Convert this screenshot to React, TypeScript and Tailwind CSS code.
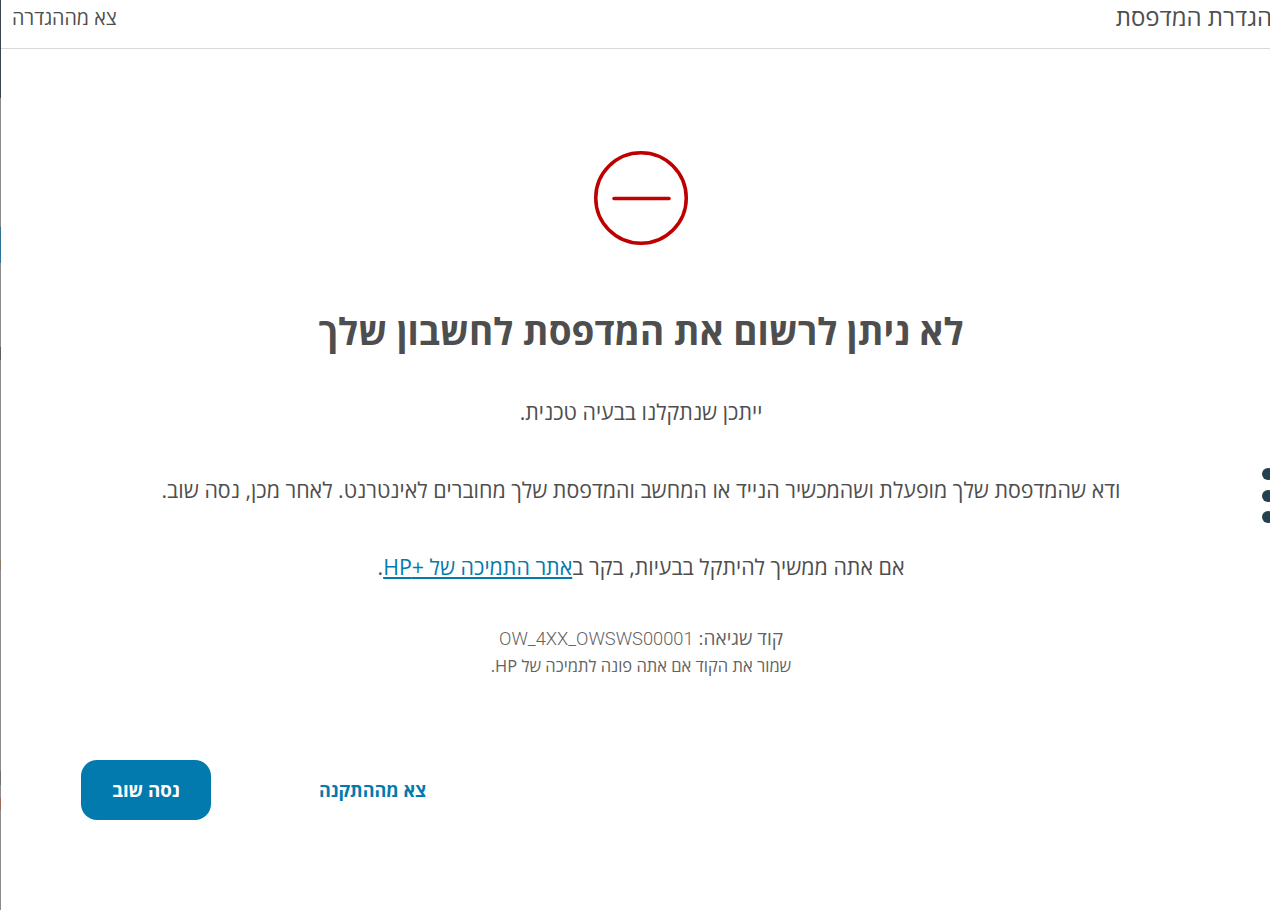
const App = () => {
  return (
    <div dir="rtl" className="relative flex h-[910px] w-full overflow-hidden bg-white font-['Open_Sans','Liberation_Sans',sans-serif] text-[#4e4e4e]">
      <main className="flex min-w-0 flex-1 flex-col">
        <header className="flex h-[49px] shrink-0 items-center justify-between border-b border-[#d9d9d9] pb-[13px] pl-[11px]">
          <h1 className="-mr-[2px] -mt-[1px] text-[24px] leading-8 font-normal">הגדרת המדפסת</h1>
          <a className="text-[19.7px] leading-6">צא מההגדרה</a>
        </header>

        <section className="flex flex-col items-center pt-[102px] pl-[11px] text-center">
          <svg width="94" height="94" viewBox="0 0 94 94" fill="none" stroke="#bf0000" strokeLinecap="round">
            <circle cx="47" cy="47" r="45.25" strokeWidth="3.5" />
            <path d="M20 47.5H75" strokeWidth="3.5" />
          </svg>

          <h2 className="mt-[62px] text-[36.9px] leading-[48px] font-bold">לא ניתן לרשום את המדפסת לחשבון שלך</h2>

          <p className="mt-[43px] text-[21.4px] leading-7">ייתכן שנתקלנו בבעיה טכנית.</p>
          <p className="mt-[50px] text-[21.4px] leading-7">
            ודא שהמדפסת שלך מופעלת ושהמכשיר הנייד או המחשב והמדפסת שלך מחוברים לאינטרנט. לאחר מכן, נסה שוב.
          </p>
          <p className="mt-[49px] text-[21.4px] leading-7">
            אם אתה ממשיך להיתקל בבעיות, בקר ב
            <a className="text-[#027aae] underline underline-offset-2">אתר התמיכה של +HP</a>.
          </p>

          <p className="mt-[45px] text-[19px] leading-6 text-[#636363]">
            קוד שגיאה: <span className="font-['Roboto',sans-serif] text-[18.3px] font-light">OW_4XX_OWSWS00001</span>
          </p>
          <p className="mt-[5px] text-[16.5px] leading-5 text-[#636363]">שמור את הקוד אם אתה פונה לתמיכה של HP.</p>
        </section>

        <footer className="mt-[84px] flex items-center justify-end gap-[108px] pl-[80px]">
          <a className="text-[18px] font-bold text-[#027aae]">צא מההתקנה</a>
          <button className="h-[60px] w-[130px] rounded-[16px] bg-[#027aae] text-[18.67px] font-bold text-white">נסה שוב</button>
        </footer>
      </main>

      {/* strip of the window behind, 1px wide */}
      <div className="flex w-px shrink-0 flex-col bg-[#8c8c8c]">
        <div className="h-[98px] bg-[#3a4654]" />
        <div className="h-[129px] bg-[#8c8c8c]" />
        <div className="h-[36px] bg-[#2f7197]" />
        <div className="h-[84px] bg-[#8c8c8c]" />
        <div className="h-[13px] bg-[#5f5f5f]" />
        <div className="h-[200px] bg-[#8c8c8c]" />
        <div className="h-[10px] bg-[#8a7a6a]" />
        <div className="h-[201px] bg-[#8c8c8c]" />
        <div className="h-[14px] bg-[#6f6f6f]" />
        <div className="h-[13px] bg-[#8c8c8c]" />
        <div className="h-[12px] bg-[#9a6a55]" />
      </div>

      <div className="absolute top-[468px] right-[-4px] flex flex-col gap-[9.5px]">
        <span className="size-3 rounded-full bg-[#23414f]" />
        <span className="size-3 rounded-full bg-[#23414f]" />
        <span className="size-3 rounded-full bg-[#23414f]" />
      </div>
    </div>
  );
};

export default App;
